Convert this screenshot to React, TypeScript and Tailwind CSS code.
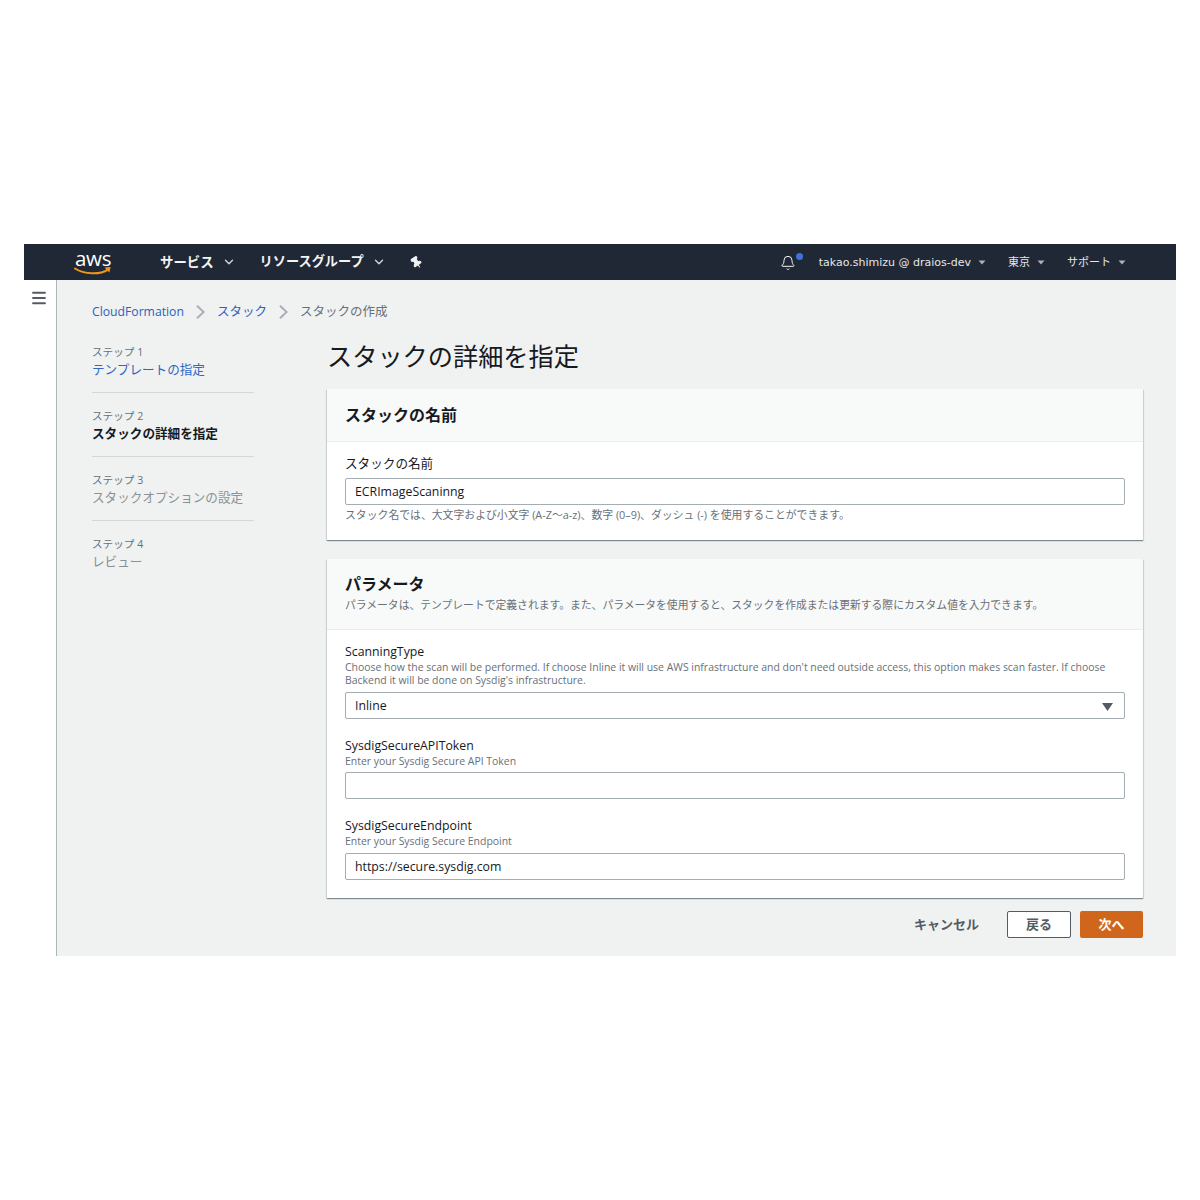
import { Bell, ChevronDown, Menu, Pin } from "lucide-react";

const font = "font-['Open_Sans','Noto_Sans_CJK_JP',sans-serif]";

function Caret() {
  return (
    <svg width="8" height="5" viewBox="0 0 8 5" className="ml-[7px]">
      <path d="M0.5 0.5H7.5L4 4.5Z" fill="#aab2bb" />
    </svg>
  );
}

function AwsLogo() {
  return (
    <div className="relative w-[38px] h-[30px]">
      <span className="absolute left-[1px] top-[-1px] text-[20.5px] leading-[24px] text-white font-['Open_Sans',sans-serif] tracking-[-0.3px]">
        aws
      </span>
      <svg width="38" height="10" viewBox="0 0 38 10" className="absolute left-0 top-[19px]">
        <path d="M1 2.5C10 8.5 26 9 34 3.6" fill="none" stroke="#f0961f" strokeWidth="2" strokeLinecap="round" />
        <path d="M30.5 1.6L36.6 1L35.4 6.6Z" fill="#f0961f" />
      </svg>
    </div>
  );
}

function TopNav() {
  return (
    <header className="h-9 bg-[#202835] flex items-center shrink-0">
      <div className="ml-[50px] w-[38px]">
        <AwsLogo />
      </div>
      <div className="ml-[48px] flex items-center font-bold text-[13.4px] text-[#f2f3f3]">
        <span>サービス</span>
        <ChevronDown className="ml-[8px] w-[14px] h-[14px]" strokeWidth={2.5} color="#cfd3d8" />
      </div>
      <div className="ml-[24px] flex items-center text-[#f2f3f3] font-bold text-[13.2px]">
        <span>リソースグループ</span>
        <ChevronDown className="ml-[8px] w-[14px] h-[14px]" strokeWidth={2.5} color="#cfd3d8" />
      </div>
      <Pin className="ml-[24px] w-[13px] h-[13px] rotate-[-35deg]" color="#f2f3f3" fill="#f2f3f3" />
      <div className="ml-auto flex items-center pt-[1px] text-[11px] text-[#e4e6e9] font-['DejaVu_Sans','Noto_Sans_CJK_JP',sans-serif]">
        <div className="relative w-[16px] h-[16px]">
          <Bell className="w-[16px] h-[16px]" color="#f2f3f3" strokeWidth={1.5} />
          <span className="absolute top-[-2px] right-[-7px] w-[7px] h-[7px] rounded-full bg-[#3b73d9]" />
        </div>
        <span className="ml-[23px] pt-[2px]">takao.shimizu @ draios-dev</span>
        <Caret />
        <span className="ml-[22px] pt-[2px]">東京</span>
        <Caret />
        <span className="ml-[22px] pt-[2px]">サポート</span>
        <Caret />
        <div className="w-[50px]" />
      </div>
    </header>
  );
}

function Crumb() {
  return (
    <svg width="9" height="14" viewBox="0 0 9 14" className="mx-[12px]">
      <path d="M1 0.8L7.6 7L1 13.2" fill="none" stroke="#a9afb5" strokeWidth="2" />
    </svg>
  );
}

function Breadcrumbs() {
  return (
    <nav className="flex items-center h-5 text-[12.5px] mb-[23px]">
      <span className="text-[#2a62bb] text-[12.2px]">CloudFormation</span>
      <Crumb />
      <span className="text-[#2a62bb]">スタック</span>
      <Crumb />
      <span className="text-[#687078]">スタックの作成</span>
    </nav>
  );
}

const steps = [
  { label: "ステップ 1", title: "テンプレートの指定", cls: "text-[#2f68c0]" },
  { label: "ステップ 2", title: "スタックの詳細を指定", cls: "text-[#16191f] font-bold" },
  { label: "ステップ 3", title: "スタックオプションの設定", cls: "text-[#8a9197]" },
  { label: "ステップ 4", title: "レビュー", cls: "text-[#8a9197]" },
];

function StepList() {
  return (
    <ol className="w-[162px] shrink-0">
      {steps.map((s, i) => (
        <li key={s.label} className={i < 3 ? "h-[48px] border-b border-[#d5d8da] mb-[16px]" : ""}>
          <div className="text-[10.6px] leading-[14px] text-[#687078]">{s.label}</div>
          <div className={`text-[12.6px] leading-[17px] mt-[2px] ${s.cls}`}>{s.title}</div>
        </li>
      ))}
    </ol>
  );
}

function Field({
  label,
  help,
  value,
  select,
  labelSize = "text-[12.3px]",
  inputGap = "mt-[5px]",
}: {
  label: string;
  help?: string;
  value?: string;
  select?: boolean;
  labelSize?: string;
  inputGap?: string;
}) {
  return (
    <div>
      <div className={`${labelSize} leading-[16px] text-[#16191f]`}>{label}</div>
      {help && <div className="text-[10.45px] leading-[13px] text-[#687078] mt-[1px]">{help}</div>}
      <div
        className={`${inputGap} h-[27px] bg-white border border-[#a3adb2] rounded-[2px] flex items-center pl-[9px] pr-[11px] pt-[2px] text-[12.3px] text-[#16191f]`}
      >
        <span>{value}</span>
        {select && (
          <svg width="11" height="8" viewBox="0 0 11 8" className="ml-auto">
            <path d="M0 0H11L5.5 8Z" fill="#545b64" />
          </svg>
        )}
      </div>
    </div>
  );
}

function Card({ children }: { children: React.ReactNode }) {
  return (
    <section className="bg-white shadow-[0_1px_1px_0_rgba(0,28,36,0.35),1px_1px_1px_0_rgba(0,28,36,0.1),-1px_1px_1px_0_rgba(0,28,36,0.1)]">
      {children}
    </section>
  );
}

export default function App() {
  return (
    <div className={`bg-white h-[1200px] pt-[244px] px-[24px] ${font}`}>
      <div className="h-[712px] flex flex-col">
        <TopNav />
        <div className="flex flex-1 bg-[#f0f1f1]">
          <aside className="w-[33px] bg-white border-r border-[#aab7b8] shrink-0 pt-[9px] pl-[6px]">
            <Menu className="w-[18px] h-[18px]" color="#545b64" strokeWidth={2.4} />
          </aside>
          <main className="flex-1 pl-[35px] pr-[33px] pt-[22px]">
            <Breadcrumbs />
            <div className="flex">
              <StepList />
              <div className="ml-[73px] flex-1">
                <h1 className="text-[25.2px] leading-[32px] text-[#16191f] -mt-[5px] mb-[17px]">スタックの詳細を指定</h1>
                <Card>
                  <div className="h-[53px] bg-[#f8f9f9] border-b border-[#eaeded] px-[18px] flex items-center">
                    <h2 className="text-[16px] font-bold text-[#16191f]">スタックの名前</h2>
                  </div>
                  <div className="px-[18px] pt-[14px] h-[98px]">
                    <Field label="スタックの名前" value="ECRImageScaninng" labelSize="text-[12.6px]" inputGap="mt-[6px]" />
                    <div className="text-[10.85px] leading-[14px] mt-[3px] text-[#687078]">
                      スタック名では、大文字および小文字 (A-Z〜a-z)、数字 (0–9)、ダッシュ (-) を使用することができます。
                    </div>
                  </div>
                </Card>
                <div className="h-[19px]" />
                <Card>
                  <div className="h-[71px] bg-[#f8f9f9] border-b border-[#eaeded] px-[18px] pt-[13px]">
                    <h2 className="text-[16px] leading-[24px] font-bold text-[#16191f]">パラメータ</h2>
                    <p className="text-[10.8px] leading-[14px] mt-[2px] text-[#687078]">
                      パラメータは、テンプレートで定義されます。また、パラメータを使用すると、スタックを作成または更新する際にカスタム値を入力できます。
                    </p>
                  </div>
                  <div className="px-[18px] pt-[14px] h-[268px] flex flex-col gap-[19px]">
                    <Field
                      label="ScanningType"
                      help="Choose how the scan will be performed. If choose Inline it will use AWS infrastructure and don't need outside access, this option makes scan faster. If choose Backend it will be done on Sysdig's infrastructure."
                      value="Inline"
                      select
                    />
                    <Field label="SysdigSecureAPIToken" help="Enter your Sysdig Secure API Token" inputGap="mt-[4px]" />
                    <Field label="SysdigSecureEndpoint" help="Enter your Sysdig Secure Endpoint" value="https://secure.sysdig.com" />
                  </div>
                </Card>
                <div className="flex items-center justify-end mt-[13px] text-[13px] font-bold">
                  <button className="text-[#545b64] mr-[28px]">キャンセル</button>
                  <button className="w-[64px] h-[27px] bg-white border border-[#545b64] rounded-[2px] text-[#545b64] mr-[9px]">戻る</button>
                  <button className="w-[63px] h-[27px] bg-[#d0661b] rounded-[2px] text-white">次へ</button>
                </div>
              </div>
            </div>
          </main>
        </div>
      </div>
    </div>
  );
}
